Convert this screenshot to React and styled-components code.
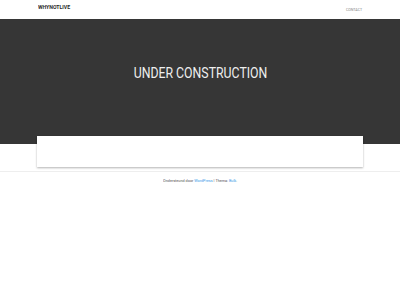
import React from "react";
import styled, { createGlobalStyle } from "styled-components";

const GlobalStyle = createGlobalStyle`
  html, body {
    margin: 0;
    padding: 0;
    background: #fff;
    font-family: Roboto, "Liberation Sans", sans-serif;
  }
`;

function App() {
  return (
    <Page>
      <GlobalStyle />
      <Header>
        <Logo>WHYNOTLIVE</Logo>
        <NavLink>CONTACT</NavLink>
      </Header>
      <Hero>
        <HeroTitle>UNDER CONSTRUCTION</HeroTitle>
      </Hero>
      <Main>
        <Card />
      </Main>
      <Footer>
        <FooterText>
          Ondersteund door <FooterLink>WordPress</FooterLink> | Thema:{" "}
          <FooterLink>Bulk</FooterLink>.
        </FooterText>
      </Footer>
    </Page>
  );
}

// Style

const Page = styled.div`
  width: 400px;
  min-height: 300px;
  background: #fff;
`;

const Header = styled.header`
  display: flex;
  justify-content: space-between;
  align-items: flex-start;
  height: 19px;
  padding: 0 38px;
  box-sizing: border-box;
  background: #fff;
`;

const Logo = styled.div`
  font-size: 6px;
  font-weight: 700;
  color: #2a2a2a;
  margin-top: 3px;
  transform: scaleX(0.86);
  transform-origin: left center;
`;

const NavLink = styled.a`
  font-size: 4.3px;
  color: #888;
  margin-top: 7px;
  transform: scaleX(0.85);
  transform-origin: right center;
`;

const Hero = styled.section`
  display: flex;
  justify-content: center;
  align-items: center;
  height: 125px;
  background: #363636;
`;

const HeroTitle = styled.h1`
  margin: 0 0 18px;
  font-size: 15px;
  font-weight: 400;
  color: #eee;
  white-space: nowrap;
  transform: scaleX(0.82);
`;

const Main = styled.main`
  display: flow-root;
  padding: 0 37px;
`;

const Card = styled.div`
  height: 31px;
  margin-top: -8px;
  background: #fff;
  box-shadow: 0 1px 2px rgba(0, 0, 0, 0.3);
  position: relative;
`;

const Footer = styled.footer`
  display: flex;
  justify-content: center;
  margin-top: 4px;
  border-top: 1px solid #eee;
  padding-top: 6px;
`;

const FooterText = styled.p`
  margin: 0;
  font-size: 4.3px;
  color: #555;
  white-space: nowrap;
  transform: scaleX(0.88);
`;

const FooterLink = styled.a`
  color: #3a9ae8;
`;

export default App;
